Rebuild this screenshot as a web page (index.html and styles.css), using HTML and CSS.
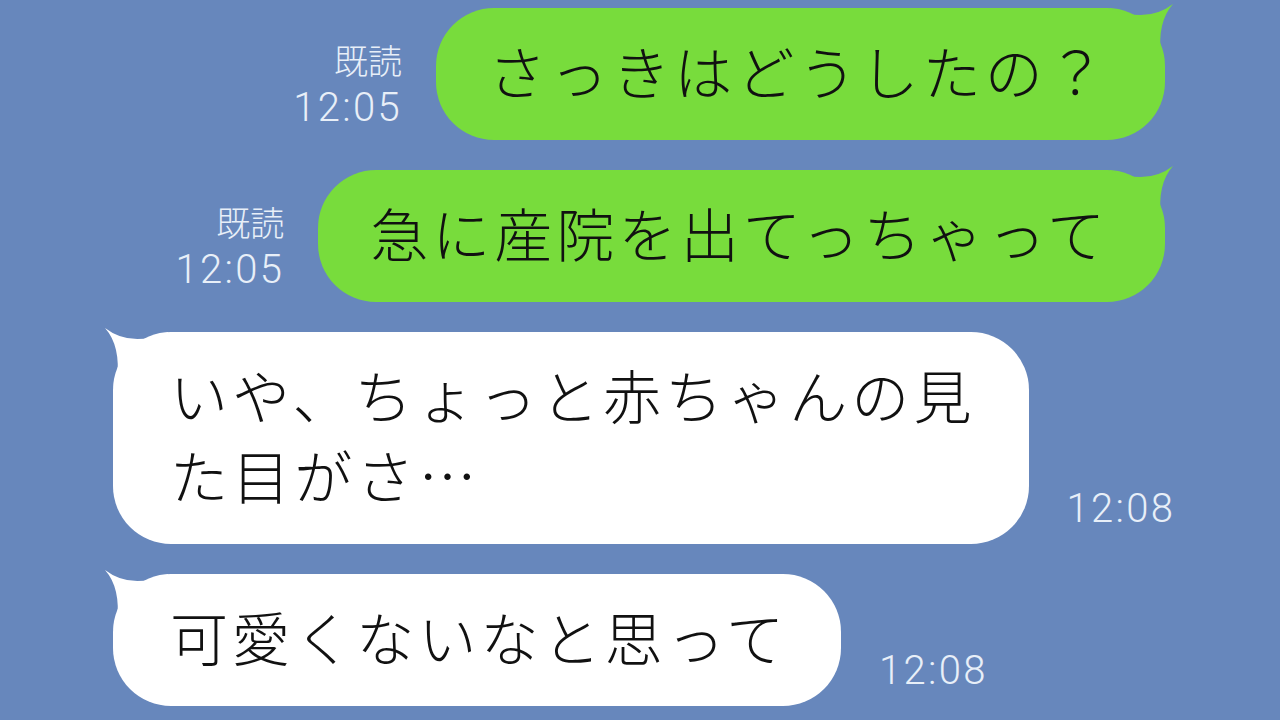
FILE: index.html
```html
<!DOCTYPE html>
<html lang="ja">
<head>
  <meta charset="UTF-8">
  <title>トーク</title>
  <link rel="stylesheet" href="styles.css">
</head>
<body>
  <div class="chat">

    <div class="row sent">
      <div class="meta">
        <span class="read">既読</span>
        <span class="time">12:05</span>
      </div>
      <div class="bubble green">
        さっきはどうしたの？
        <svg class="tail" viewBox="0 0 70 56" width="70" height="56"><path d="M3 6 Q40 22 66 2 Q50 20 54 54 L3 54 Z"/></svg>
      </div>
    </div>

    <div class="row sent">
      <div class="meta">
        <span class="read">既読</span>
        <span class="time">12:05</span>
      </div>
      <div class="bubble green">
        急に産院を出てっちゃって
        <svg class="tail" viewBox="0 0 70 56" width="70" height="56"><path d="M3 6 Q40 22 66 2 Q50 20 54 54 L3 54 Z"/></svg>
      </div>
    </div>

    <div class="row received">
      <div class="bubble white">
        いや、ちょっと赤ちゃんの見<br>た目がさ…
        <svg class="tail" viewBox="0 0 70 56" width="70" height="56"><path d="M3 6 Q40 22 66 2 Q50 20 54 54 L3 54 Z"/></svg>
      </div>
      <div class="meta">
        <span class="time">12:08</span>
      </div>
    </div>

    <div class="row received">
      <div class="bubble white">
        可愛くないなと思って
        <svg class="tail" viewBox="0 0 70 56" width="70" height="56"><path d="M3 6 Q40 22 66 2 Q50 20 54 54 L3 54 Z"/></svg>
      </div>
      <div class="meta">
        <span class="time">12:08</span>
      </div>
    </div>

  </div>
</body>
</html>
```

FILE: styles.css
```css
body {
  margin: 0;
  background-color: #6787bc;
  font-family: "Noto Sans CJK JP", "Noto Sans", sans-serif;
  height: 720px;
  overflow: hidden;
}
.chat {
  display: flex;
  flex-direction: column;
  gap: 30px;
  padding-top: 8px;
}
.row {
  display: flex;
  align-items: flex-end;
}
.row.sent {
  justify-content: flex-end;
  padding-right: 115px;
}
.row.received {
  justify-content: flex-start;
  padding-left: 113px;
}
.bubble {
  position: relative;
  font-size: 58px;
  font-weight: 300;
  letter-spacing: 4.1px;
  line-height: 80px;
  color: #111;
  white-space: nowrap;
  border-radius: 58px;
  padding: 22px 56px 30px 52px;
}
.bubble.green {
  background-color: #78dc3c;
}
.bubble.white {
  background-color: #ffffff;
  padding: 22px 53px 30px 57px;
}
.tail {
  position: absolute;
  top: -6px;
  right: -12px;
}
.green .tail {
  fill: #78dc3c;
}
.white .tail {
  fill: #ffffff;
  right: auto;
  left: -12px;
  transform: scaleX(-1);
}
.meta {
  display: flex;
  flex-direction: column;
  align-items: flex-end;
  gap: 10px;
  color: #e8eff8;
  font-weight: 300;
  margin-bottom: 15px;
}
.sent .meta {
  margin-right: 34px;
  margin-bottom: 12px;
}
.received .meta {
  margin-left: 38px;
}
.read {
  font-size: 34px;
  line-height: 36px;
}
.time {
  font-family: Roboto, "Noto Sans", sans-serif;
  font-size: 40px;
  letter-spacing: 2.3px;
  line-height: 40px;
}
```
